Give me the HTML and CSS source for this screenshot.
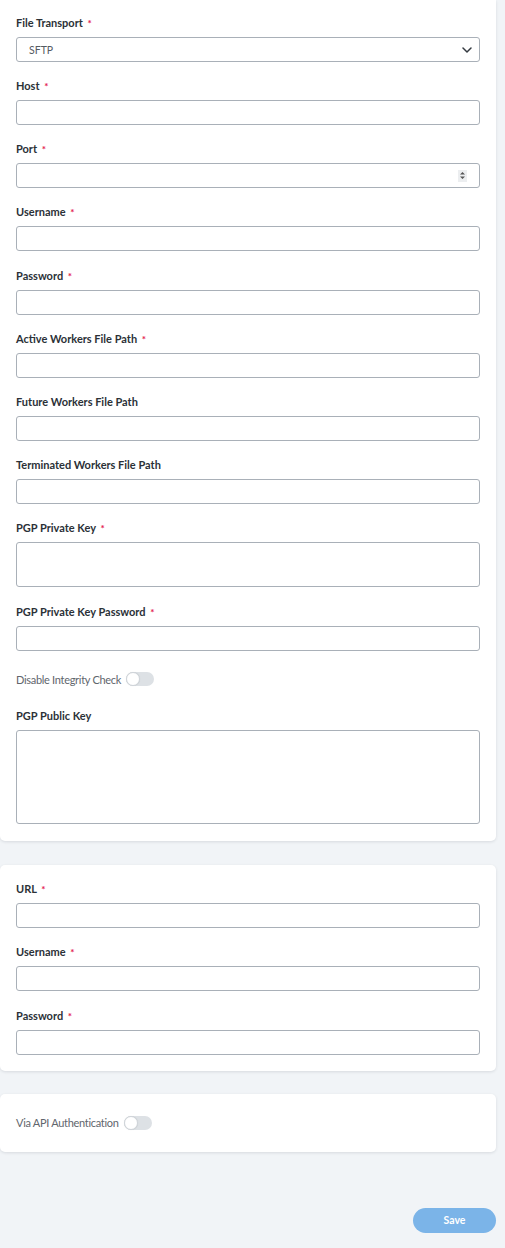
FILE: index.html
```html
<!DOCTYPE html>
<html>
<head>
<meta charset="utf-8">
<link rel="stylesheet" href="styles.css">
</head>
<body>
<div class="page">
  <section class="card card-first">
    <div class="field">
      <label class="label">File Transport <span class="req">*</span></label>
      <div class="input select">
        <span class="value">SFTP</span>
        <svg class="chevron" width="10" height="6" viewBox="0 0 10 6"><path d="M1 1 L5 5 L9 1" fill="none" stroke="#343a40" stroke-width="1.5" stroke-linecap="round" stroke-linejoin="round"/></svg>
      </div>
    </div>
    <div class="field">
      <label class="label">Host <span class="req">*</span></label>
      <div class="input"></div>
    </div>
    <div class="field">
      <label class="label">Port <span class="req">*</span></label>
      <div class="input number">
        <span class="spin">
          <svg width="7" height="9" viewBox="0 0 7 9"><path d="M1 3.5 L3.5 1 L6 3.5 Z M1 5.5 L3.5 8 L6 5.5 Z" fill="#555"/></svg>
        </span>
      </div>
    </div>
    <div class="field">
      <label class="label">Username <span class="req">*</span></label>
      <div class="input"></div>
    </div>
    <div class="field">
      <label class="label">Password <span class="req">*</span></label>
      <div class="input"></div>
    </div>
    <div class="field">
      <label class="label">Active Workers File Path <span class="req">*</span></label>
      <div class="input"></div>
    </div>
    <div class="field">
      <label class="label">Future Workers File Path</label>
      <div class="input"></div>
    </div>
    <div class="field">
      <label class="label">Terminated Workers File Path</label>
      <div class="input"></div>
    </div>
    <div class="field field-tall">
      <label class="label">PGP Private Key <span class="req">*</span></label>
      <div class="input textarea-sm"></div>
    </div>
    <div class="field">
      <label class="label">PGP Private Key Password <span class="req">*</span></label>
      <div class="input"></div>
    </div>
    <div class="toggle-row toggle-row-inline">
      <span class="toggle-label">Disable Integrity Check</span>
      <span class="switch"><span class="knob"></span></span>
    </div>
    <div class="field field-last">
      <label class="label">PGP Public Key</label>
      <div class="input textarea-lg"></div>
    </div>
  </section>

  <section class="card card-second">
    <div class="field">
      <label class="label">URL <span class="req">*</span></label>
      <div class="input"></div>
    </div>
    <div class="field">
      <label class="label">Username <span class="req">*</span></label>
      <div class="input"></div>
    </div>
    <div class="field field-last">
      <label class="label">Password <span class="req">*</span></label>
      <div class="input"></div>
    </div>
  </section>

  <section class="card card-third">
    <div class="toggle-row">
      <span class="toggle-label">Via API Authentication</span>
      <span class="switch"><span class="knob"></span></span>
    </div>
  </section>

  <div class="actions">
    <button class="save">Save</button>
  </div>
</div>
</body>
</html>
```
FILE: styles.css
```css
* { box-sizing: border-box; }
html, body { margin: 0; padding: 0; }
body {
  background: #f1f4f7;
  font-family: "Source Sans Pro", Lato, "Liberation Sans", sans-serif;
  color: #343a40;
  width: 505px;
  height: 1248px;
  overflow: hidden;
}
.page {
  width: 496px;
  display: flex;
  flex-direction: column;
}
.card {
  background: #fff;
  border-radius: 0 0 5px 5px;
  box-shadow: 0 1px 3px rgba(30, 40, 60, 0.12);
  padding: 15px 16px 17px 16px;
  display: flex;
  flex-direction: column;
}
.card-second, .card-third {
  border-radius: 5px;
}
.card-second {
  margin-top: 24px;
  padding: 16px;
}
.card-third {
  padding: 0 16px;
  height: 58px;
  justify-content: center;
  margin-top: 23px;
}
.field {
  display: flex;
  flex-direction: column;
  margin-bottom: 16.15px;
}
.field-tall { margin-bottom: 17px; }
.field-last { margin-bottom: 0; }
.label {
  font-size: 11px;
  font-weight: 700;
  line-height: 16px;
  height: 16px;
  margin-bottom: 6px;
  color: #2b3137;
}
.req {
  color: #e3204f;
  font-size: 10px;
  margin-left: 2px;
}
.input {
  height: 25px;
  border: 1px solid #a9b0b8;
  border-radius: 3px;
  background: #fff;
  display: flex;
  align-items: center;
  padding: 0 7px 0 12px;
}
.select { justify-content: space-between; }
.value {
  font-size: 10.5px;
  color: #555b61;
}
.number { justify-content: flex-end; padding-right: 12px; }
.spin {
  width: 9px;
  height: 12px;
  background: #eceef0;
  display: flex;
  align-items: center;
  justify-content: center;
}
.textarea-sm { height: 45px; }
.textarea-lg { height: 94px; }
.toggle-row {
  display: flex;
  align-items: center;
  gap: 5px;
  height: 24px;
}
.toggle-row-inline { margin-bottom: 17px; }
.toggle-label {
  font-size: 11px;
  letter-spacing: -0.3px;
  color: #5f666d;
}
.switch {
  position: relative;
  width: 28px;
  height: 14px;
  border-radius: 7px;
  background: #dde1e5;
  display: inline-block;
}
.knob {
  position: absolute;
  left: 0;
  top: 0;
  width: 14px;
  height: 14px;
  border-radius: 50%;
  background: #fff;
  border: 1px solid #cfd4d9;
  box-shadow: 0 0 1px rgba(0,0,0,0.1);
}
.actions {
  display: flex;
  justify-content: flex-end;
  margin-top: 56px;
}
.save {
  width: 83px;
  height: 25px;
  border: none;
  border-radius: 13px;
  background: #7bb4e8;
  color: #fff;
  font-family: inherit;
  font-weight: 700;
  font-size: 10.5px;
  padding: 0;
}
```
